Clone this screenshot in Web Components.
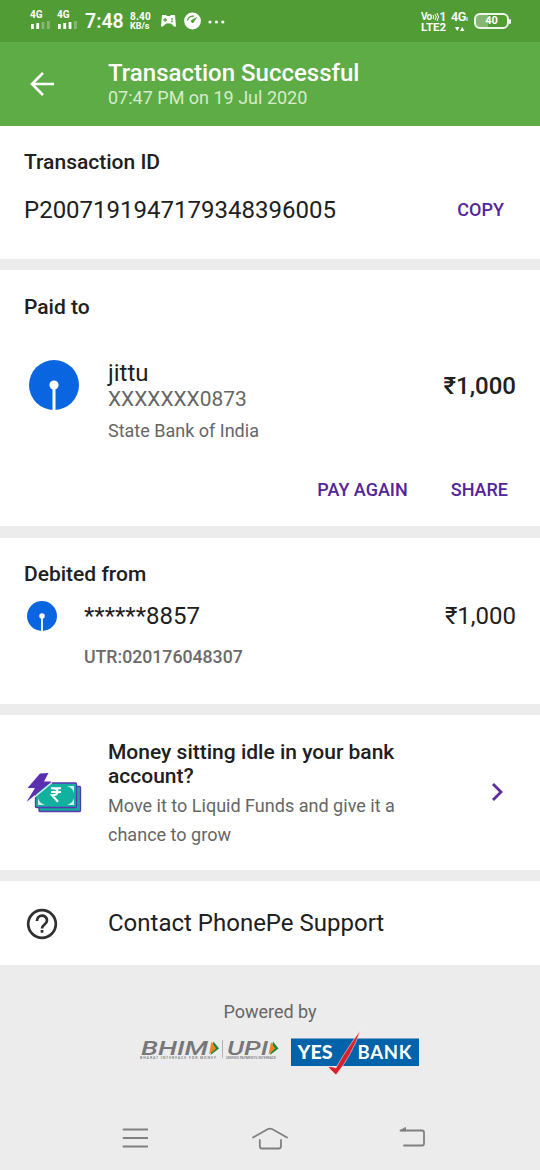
<!DOCTYPE html>
<html lang="en">
<head>
<meta charset="utf-8">
<title>Transaction Successful</title>
<style>
html,body{margin:0;padding:0}
body{font-family:Roboto,"Noto Sans",sans-serif;background:#ececec;color:#202020;overflow:hidden}
</style>
</head>
<body>
<payment-page></payment-page>
<script>
function define(name, html) {
  const template = document.createElement('template');
  template.innerHTML = html;
  customElements.define(name, class extends HTMLElement {
    constructor() {
      super();
      this.attachShadow({ mode: 'open' }).append(template.content.cloneNode(true));
    }
  });
}

define('text-line', `
<style>:host{display:block;white-space:nowrap;font-size:var(--s,18px);font-weight:var(--w,400);color:var(--c,inherit);line-height:var(--l,24px);letter-spacing:var(--ls,0)}</style>
<slot></slot>`);

define('bank-logo', `
<style>:host{display:block;flex:none}svg{display:block;width:100%;height:100%}</style>
<svg viewBox="0 0 50 50"><circle cx="25" cy="25" r="25" fill="#0a66e0"/><circle cx="25" cy="25" r="4.6" fill="#fff"/><path d="M25 25V50" stroke="#fff" stroke-width="3"/></svg>`);

define('signal-bars', `
<style>:host{display:flex;flex-direction:column;width:22px;font:700 10px/10px Roboto,sans-serif}svg{display:block;margin-top:1px}rect:nth-child(n+4){opacity:.3}:host([low]) rect:nth-child(3){opacity:.3}</style>
<slot></slot>
<svg width="22" height="9" fill="#fff"><rect x="1" y="3" width="2.8" height="5"/><rect x="6.3" y="2" width="2.800" height="6"/><rect x="11.600" y="1" width="2.800" height="7"/><rect x="17" y="0" width="2.800" height="8"/></svg>`);

define('status-bar', `
<style>
:host{display:flex;height:42px;background:#529c36;color:#fff;box-sizing:border-box;padding:10px 31px 0 30px;align-items:flex-start}
svg{display:block;flex:none}
signal-bars+signal-bars{margin-left:5px}
.clock{margin:1px 0 0 6px;width:42px}
.rate{margin-left:3px;width:30px}
.net{margin-left:auto;width:30px}.g{width:19px}
.bat{margin-top:3px;margin-left:4px;width:35px;height:16px;box-sizing:border-box;border:2px solid #eef6ea;border-radius:6px;text-align:center;background:linear-gradient(90deg,#84b772 40%,transparent 40%);position:relative}
.bat::after{content:"";position:absolute;right:-4px;top:4px;width:2px;height:5px;background:#eef6ea;border-radius:1px}
.row{display:flex;align-items:center;height:13px}
</style>
<signal-bars low>4G</signal-bars><signal-bars>4G</signal-bars>
<text-line class="clock" style="--s:19.500px;--w:600;--l:22px">7:48</text-line>
<div class="rate"><text-line style="--s:10px;--w:700;--l:13px;--ls:.2px">8.40</text-line><text-line style="--s:9px;--w:700;--l:7px">KB/s</text-line></div>
<svg width="17" height="14" viewBox="0 0 17 14" style="margin-top:4px"><path fill="#fff" fill-rule="evenodd" d="M2 1h4l1 1h3l1-1h4l1 11.500h-2L11 9.500H6L3 12.500H1zM4.500 4V5.200H3.200v1.200h1.300v1.300h1.200V6.400H7V5.200H5.700V4zM12 4a.9.9 0 100 1.800.9.900 0 000-1.800m0 2.500a.9.900 0 100 1.800.9.900 0 000-1.800"/></svg>
<svg width="17" height="18" viewBox="0 0 17 18" style="margin:2px 0 0 7px"><circle cx="8.500" cy="9" r="8.400" fill="#fff"/><path d="M3.500 8.500A5.300 5.300 0 0 1 10 4.200" stroke="#529c36" stroke-width="1.300" fill="none"/><path d="M13.500 4.800L9.600 10.600A1.700 1.700 0 0 1 7.200 8.300z" fill="#529c36"/></svg>
<svg width="20" height="4" viewBox="0 0 20 4" fill="#fff" style="margin:10px 0 0 6px"><circle cx="3" cy="2" r="1.600"/><circle cx="9.400" cy="2" r="1.600"/><circle cx="15.800" cy="2" r="1.600"/></svg>
<div class="net">
 <div class="row"><text-line style="--s:10px;--w:600;--l:12px;--ls:-.7px">Vo</text-line><svg width="8" height="10" viewBox="0 0 8 10" fill="none" stroke="#fff"><path d="M1 3q1.500 2 0 4M3 2q2.500 3 0 6M5 1q3 4 0 8"/></svg><text-line style="--s:12px;--w:700;--l:12px">1</text-line></div>
 <text-line style="--s:11.500px;--w:700;--l:8px">LTE2</text-line>
</div>
<div class="g"><text-line style="--s:12.500px;--w:600;--l:14px;--ls:-.3px">4G<span style="font-size:7px">ı</span></text-line><svg width="18" height="6" fill="#fff"><path d="M4 1h4.500L6.200 5zM9 5h4.500L11.200 1z"/></svg></div>
<div class="bat"><text-line style="--s:11px;--w:700;--l:12px">40</text-line></div>`);

define('app-header', `
<style>:host{display:flex;height:84px;background:#5eac46;color:#fff;box-sizing:border-box;padding:19px 0 0 30px;align-items:flex-start}svg{display:block;margin:11px 54px 0 0}</style>
<svg width="24" height="24" viewBox="0 0 24 24" fill="none" stroke="#fff" stroke-width="2.600"><path d="M24 12H2M13 1L2 12l11 11"/></svg>
<div><text-line style="--s:24px;--w:500;--l:25px">Transaction Successful</text-line><text-line style="--s:18px;--l:24px;--c:#d5edca">07:47 PM on 19 Jul 2020</text-line></div>`);

define('info-card', `
<style>:host{display:block;background:#fff;box-sizing:border-box;height:var(--h);margin-bottom:var(--gap,11px);padding:0 24px;overflow:hidden}</style>
<slot></slot>`);

define('flex-row', `
<style>:host{display:flex;justify-content:space-between;align-items:center}</style><slot></slot>`);

define('money-icon', `
<style>:host{display:block;flex:none}svg{display:block}</style>
<svg width="58" height="42" viewBox="0 0 58 42"><rect x="13" y="13.500" width="41.500" height="25" rx="1" fill="#12a99b" stroke="#5a35b4" stroke-width="1.300"/><rect x="9.500" y="10" width="41" height="24.500" rx="1" fill="#12b09f" stroke="#5a35b4" stroke-width="1.300"/><path d="M41 13h7v7q-1-5-7-7M12 25q1 5 7 7h-7zM48 25v7h-7q6-2 7-7" fill="#c9f3e8"/><path d="M14 .500L22.500 0 18 8.500h7.500L.500 29 9 15H1.500z" fill="#5b2fb2"/><path d="M26 9.500L2 29.500" stroke="#e6f4fb" stroke-width="1.200"/><path d="M25 15.300h10M25 19h10M26 15.300c7.500 0 7.500 7 0 7l6 6.500" fill="none" stroke="#fff" stroke-width="2"/></svg>`);

define('bhim-logo', `
<style>:host{display:block;flex:none}svg{display:block;overflow:visible}text{font-family:Roboto,sans-serif}</style>
<svg width="140" height="24" viewBox="0 0 140 24">
<g font-size="20" font-style="italic" font-weight="500" fill="#77777a"><text x="1" y="15.500" textLength="67" lengthAdjust="spacingAndGlyphs">BHIM</text><text x="87" y="15.500" textLength="41" lengthAdjust="spacingAndGlyphs">UPI</text></g>
<path d="M73.500 2.500l5.500 7-8.500 6.500z" fill="#178a43"/><path d="M71.500 2.500l4.500 7-7 6z" fill="#f58220"/>
<path d="M82.500 1v18" stroke="#a5a5a5" stroke-width=".8"/>
<path d="M133 2.500l5.500 7-8.500 6.500z" fill="#178a43"/><path d="M131 3l4.200 6.500-6.700 6z" fill="#f58220"/>
<g font-size="3.600" font-weight="500" fill="#77777a"><text x="0" y="19.500" textLength="76">BHARAT INTERFACE FOR MONEY</text><text x="86" y="19.500" textLength="50" lengthAdjust="spacingAndGlyphs">UNIFIED PAYMENTS INTERFACE</text></g></svg>`);

define('yes-bank-logo', `
<style>:host{display:block;flex:none}svg{display:block}text{font-family:Lato,sans-serif;font-size:18.500px;fill:#fff}</style>
<svg width="130" height="46" viewBox="0 0 130 46"><rect x="1" y="8.500" width="128" height="27.500" fill="#0062a9"/>
<text x="7.500" y="29" font-weight="900" textLength="35" lengthAdjust="spacingAndGlyphs">YES</text><text x="67.500" y="29" font-weight="700" textLength="54">BANK</text>
<path d="M70.500 0Q62 25 46 45q-5-5-8-8 4-1 8 1Q54 23 70.500 0" fill="#db1f2c" stroke="#fff" stroke-width=".5"/></svg>`);

define('page-footer', `
<style>:host{display:flex;flex-direction:column;align-items:center;height:144px;box-sizing:border-box;padding-top:35px}.logos{display:flex;width:280px;margin:6px 0 0 20px;align-items:flex-start}bhim-logo{margin-top:9px;width:150px}</style>
<text-line style="--s:18px;--c:#666">Powered by</text-line>
<div class="logos"><bhim-logo></bhim-logo><yes-bank-logo></yes-bank-logo></div>`);

define('nav-bar', `
<style>:host{display:flex;height:57px;justify-content:space-between;align-items:center;padding:0 114px 4px 122px}svg{display:block}</style>
<svg width="26" height="20" stroke="#808080" stroke-width="1.800" stroke-linecap="round"><path d="M1.500 1.500h24M1.500 10h24M1.500 18.500h24"/></svg>
<svg width="36" height="24" viewBox="0 0 36 24" style="margin-right:7px" fill="none" stroke="#808080" stroke-width="1.800" stroke-linecap="round" stroke-linejoin="round"><path d="M1 11.500L15.500 3.300q2.500-1.300 5 0L35 11.500M7.800 14V20q0 2.500 2 2.500h17q2.200 0 2.200-2.500v-6"/></svg>
<svg width="27" height="21" viewBox="0 0 27 21" fill="none" stroke="#808080" stroke-width="1.800" stroke-linecap="round"><path d="M1.500 3.500H23q2 0 2 2v11q0 2-2 2H5"/><path d="M1.500 3.500l5-3v3z" fill="#808080" stroke-width="1"/></svg>`);

define('payment-page', `
<style>
:host{display:flex;flex-direction:column;width:540px;height:1170px;background:#ececec}
info-card,status-bar,app-header,page-footer,nav-bar{flex:none}
text-line.h{--s:21px;--w:500}
text-line.action{--s:18px;--w:500;--c:#53259a}
.dim{--c:#666}
</style>
<status-bar></status-bar><app-header></app-header>
<info-card style="--h:133px">
 <text-line class="h" style="margin-top:24px">Transaction ID</text-line>
 <flex-row style="margin:24px 12px 0 0"><text-line style="--s:24px">P2007191947179348396005</text-line><text-line class="action">COPY</text-line></flex-row>
</info-card>
<info-card style="--h:256px;--gap:12px">
 <text-line class="h" style="margin-top:25px">Paid to</text-line>
 <flex-row style="margin-top:41px;align-items:flex-start">
  <bank-logo style="width:50px;height:50px;margin:0 29px 0 5px"></bank-logo>
  <div style="flex:1"><text-line style="--s:24px;--l:27px">jittu</text-line><text-line class="dim" style="--s:20.900px;--l:25px">XXXXXXX0873</text-line><text-line class="dim" style="margin-top:7px">State Bank of India</text-line></div>
  <text-line style="--s:24px;--w:500;margin-top:14px">₹1,000</text-line>
 </flex-row>
 <flex-row style="margin:35px 8px 0 0;justify-content:flex-end;gap:43px"><text-line class="action">PAY AGAIN</text-line><text-line class="action">SHARE</text-line></flex-row>
</info-card>
<info-card style="--h:166px">
 <text-line class="h" style="margin-top:24px">Debited from</text-line>
 <flex-row style="margin-top:15px;height:30px"><bank-logo style="width:30px;height:30px;margin:0 27px 0 3px"></bank-logo><text-line style="--s:24px;flex:1">******8857</text-line><text-line style="--s:24px">₹1,000</text-line></flex-row>
 <text-line style="--s:17.700px;--w:500;--c:#6a6a6a;margin:14px 0 0 60px">UTR:020176048307</text-line>
</info-card>
<info-card style="--h:155px">
 <flex-row style="margin-top:25px;align-items:flex-start"><money-icon style="margin:33px 24px 0 2px"></money-icon>
 <div style="flex:1"><text-line class="h">Money sitting idle in your bank<br>account?</text-line><text-line class="dim" style="--s:18.050px;--l:28.500px;margin-top:4px">Move it to Liquid Funds and give it a<br>chance to grow</text-line></div>
 <svg width="12" height="20" viewBox="0 0 12 20" style="margin:42px 13px 0 0" fill="none" stroke="#5a2ca0" stroke-width="2.800"><path d="M2 2l8 8-8 8"/></svg></flex-row>
</info-card>
<info-card style="--h:84px;--gap:0">
 <flex-row style="height:84px;justify-content:flex-start"><svg width="32" height="32" viewBox="0 0 32 32" style="margin:1px 50px 0 2px" fill="none" stroke="#303030" stroke-width="2.700"><circle cx="16" cy="16" r="13.800"/><path d="M11 13c0-7 10-7 10-.5 0 4-5 4-5 8M16 22v2.800"/></svg><text-line style="--s:24px">Contact PhonePe Support</text-line></flex-row>
</info-card>
<page-footer></page-footer><nav-bar></nav-bar>`);
</script>
</body>
</html>
